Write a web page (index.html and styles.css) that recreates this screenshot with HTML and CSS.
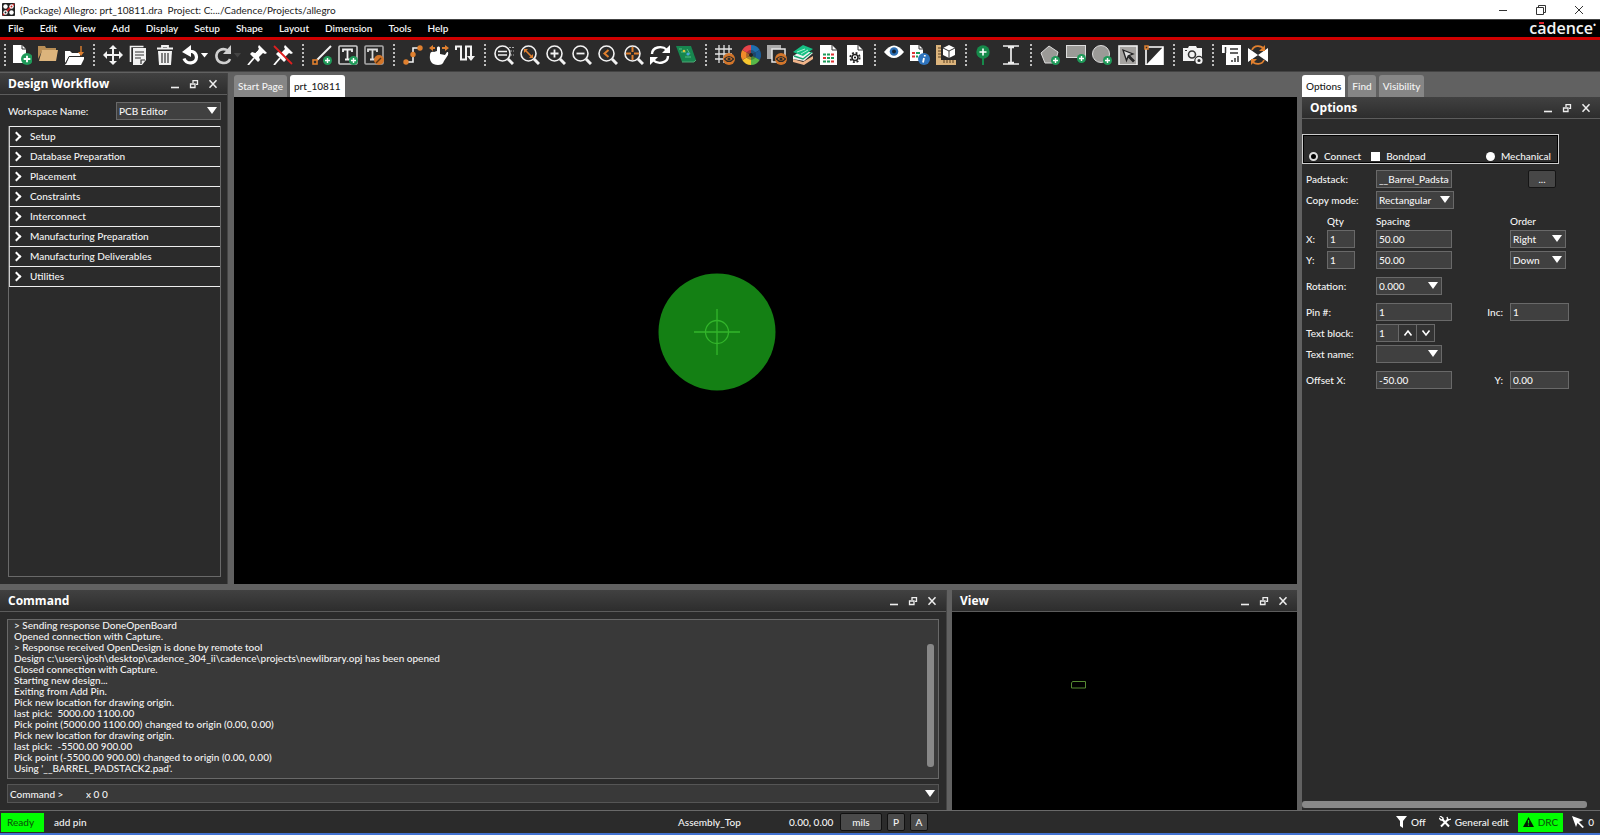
FILE: index.html
```html
<!DOCTYPE html>
<html lang="en">
<head>
  <meta charset="UTF-8">
  <meta name="viewport" content="width=device-width, initial-scale=1.0">
  <title>Allegro: prt_10811.dra</title>
  <link rel="stylesheet" href="styles.css">
</head>
<body>

  <!-- shared shapes -->
  <svg class="defs" width="0" height="0" aria-hidden="true">
    <symbol id="plus" viewBox="0 0 9 9"><circle cx="4.500" cy="4.500" r="4.500" fill="#1f9a59"/><path d="M4.500 2v5M2 4.500h5" stroke="#fff" stroke-width="1.400"/></symbol>
    <symbol id="eye-badge" viewBox="0 0 12 12"><circle cx="6" cy="6" r="6" fill="#d2752a"/><path d="M1.500 6Q6 1 10.500 6Q6 11 1.500 6z" fill="none" stroke="#2b2b2b" stroke-width="1.200"/><circle cx="6" cy="6" r="1.600" fill="#2b2b2b"/></symbol>
    <symbol id="lens" viewBox="0 0 20 20"><circle cx="8.500" cy="8.500" r="7.500" fill="none" stroke="#f2f2f2" stroke-width="1.600"/><path d="M14 14l5 5" stroke="#f2f2f2" stroke-width="3"/></symbol>
    <symbol id="min" viewBox="0 0 10 10"><path d="M1 8.500h8" stroke="#eee" stroke-width="1.600"/></symbol>
    <symbol id="restore" viewBox="0 0 10 10"><path d="M4 4V1.700h4.500v3.600H7M1.500 5h4.500v3.500H1.500z" fill="none" stroke="#eee" stroke-width="1.300"/></symbol>
    <symbol id="close" viewBox="0 0 10 10"><path d="M1.500 1.200l7 7.600M8.500 1.200l-7 7.600" stroke="#eee" stroke-width="1.500"/></symbol>
  </svg>

  <header class="titlebar">
    <svg width="13" height="13" viewBox="0 0 13 13"><rect width="13" height="13" rx="1" fill="#222"/><path d="M1 12L12 1" stroke="#c22" stroke-width="2"/><g fill="#fff"><circle cx="3.500" cy="3.500" r="2.200"/><circle cx="9.500" cy="3.500" r="2.200"/><circle cx="3.500" cy="9.500" r="2.200"/><circle cx="9.500" cy="9.500" r="2.200"/></g><circle cx="9.500" cy="3.500" r="1" fill="#c22"/><circle cx="3.500" cy="9.500" r="1" fill="#222"/></svg>
    <span class="titlebar-text">(Package) Allegro: prt_10811.dra&nbsp; Project: C:.../Cadence/Projects/allegro</span>
    <div class="window-buttons">
      <button aria-label="Minimize"><svg width="10" height="10"><path d="M1 5.500h8" stroke="#333"/></svg></button>
      <button aria-label="Restore"><svg width="10" height="10"><path d="M2.500 2.500V.5h7v7h-2M.5 2.500h7v7h-7z" fill="none" stroke="#333"/></svg></button>
      <button aria-label="Close"><svg width="10" height="10"><path d="M1 1l8 8M9 1l-8 8" stroke="#333"/></svg></button>
    </div>
  </header>

  <nav class="menubar">
    <button>File</button>
    <button>Edit</button>
    <button>View</button>
    <button>Add</button>
    <button>Display</button>
    <button>Setup</button>
    <button>Shape</button>
    <button>Layout</button>
    <button>Dimension</button>
    <button>Tools</button>
    <button>Help</button>
    <span class="logo">c<span class="logo-a">a</span>dence<sup>&bull;</sup></span>
  </nav>

  <div class="toolbar">
    <!-- file -->
    <div class="tools">
      <button aria-label="New"><svg viewBox="0 0 20 20"><path d="M1 0h9l4 4v14H1z" fill="#fff"/><path d="M10 0v4h4" fill="none" stroke="#2b2b2b"/><use href="#plus" x="9" y="8" width="12" height="12"/></svg></button>
      <button aria-label="Open"><svg viewBox="0 0 20 20"><path d="M0 1h7l1 2h10v3H4L0 14z" fill="#b88d55"/><path d="M4 5h16l-2 11H1z" fill="#dcb47c"/></svg></button>
      <button aria-label="Save"><svg viewBox="0 0 20 20"><path d="M1 6h5l2 2h8v4H5l-4 6z" fill="#fff"/><path d="M5 12h16l-4 8H1z" fill="#fff"/><path d="M16 11.500H5L1.500 19" fill="none" stroke="#2b2b2b"/><path d="M17 1v8" stroke="#e0802f" stroke-width="1.400"/><path d="M14 7h6l-3 4z" fill="#e0802f"/></svg></button>
    </div>
    <!-- edit -->
    <div class="tools">
      <button aria-label="Move"><svg viewBox="0 0 20 20"><path d="M10 3v14M3 10h14" stroke="#f2f2f2" stroke-width="2"/><path d="M10 0l4 4H6zM10 20l4-4H6zM0 10l4-4v8zM20 10l-4-4v8z" fill="#f2f2f2"/></svg></button>
      <button aria-label="Copy"><svg viewBox="0 0 20 20"><path d="M1.500 17V1.500h13" fill="none" stroke="#f2f2f2" stroke-width="1.600"/><path d="M4 3h13v12l-4 5H4z" fill="#f2f2f2"/><path d="M6 7h9M6 10h9M6 13h6M12 19v-4h4" stroke="#333" stroke-width="1.200" fill="none"/></svg></button>
      <button aria-label="Delete"><svg viewBox="0 0 20 20"><path d="M2 3.500h16M7 3V1h6v2" fill="none" stroke="#f2f2f2" stroke-width="1.800"/><path d="M3 6h14l-1 14H4z" fill="#f2f2f2"/><path d="M7 8v10M10 8v10M13 8v10" stroke="#333" stroke-width="1.200"/></svg></button>
      <button class="split" aria-label="Undo"><svg viewBox="0 0 20 20"><path d="M5 7c5-1.500 10-1 10.500 5 0 7-10 8-12.500 1.500" fill="none" stroke="#fff" stroke-width="3.200"/><path d="M1 7l9-7v12z" fill="#fff"/></svg><i class="caret"></i></button>
      <button class="split off" aria-label="Redo"><svg viewBox="0 0 20 20"><path d="M14 5.500C8 2 2 6 2.500 12c1 7 11 8 13.500 2" fill="none" stroke="#d0d0d0" stroke-width="2.600"/><path d="M17 0v9h-8z" fill="#d0d0d0"/></svg><i class="caret"></i></button>
      <button aria-label="Fix"><svg viewBox="0 0 20 20"><path d="M12 0l8 8-2 1-2-1-4 4 1 3-2 2-8-8 2-2 3 1 4-4-1-2z" fill="#fff"/><path d="M11 5l-3 3" stroke="#444"/><path d="M7 13l-6 7" stroke="#fff" stroke-width="1.800"/></svg></button>
      <button aria-label="Unfix"><svg viewBox="0 0 20 20"><path d="M12 0l8 8-2 1-2-1-4 4 1 3-2 2-8-8 2-2 3 1 4-4-1-2z" fill="#fff"/><path d="M7 13l-6 7" stroke="#fff" stroke-width="1.800"/><path d="M1 1l18 18" stroke="#e02020" stroke-width="1.800"/></svg></button>
    </div>
    <!-- text -->
    <div class="tools">
      <button aria-label="Add line"><svg viewBox="0 0 20 20"><path d="M5 15L19 1" stroke="#f2f2f2" stroke-width="2"/><rect x="1" y="15" width="4" height="4" fill="none" stroke="#e0802f" stroke-width="1.600"/><use href="#plus" x="11" y="11" width="9" height="9"/></svg></button>
      <button aria-label="Add text"><svg viewBox="0 0 20 20"><rect x="1" y="1" width="18" height="18" rx="1" fill="#2b2b2b" stroke="#ccc" stroke-width="1.600"/><path d="M5 7V4.500h9V7M9.500 4.500v10M7 14.500h5" fill="none" stroke="#f2f2f2" stroke-width="1.800"/><use href="#plus" x="11" y="11" width="9" height="9"/></svg></button>
      <button aria-label="Edit text"><svg viewBox="0 0 20 20"><rect x="1" y="1" width="18" height="18" rx="1" fill="#2b2b2b" stroke="#aaa" stroke-width="1.600"/><path d="M4 7V4.500h9V7M8.500 4.500v10M6 14.500h5" fill="none" stroke="#ddd" stroke-width="1.800"/><circle cx="15" cy="15" r="5" fill="#d2752a"/><path d="M12 18l5-5" stroke="#5a3410" stroke-width="1.500"/></svg></button>
    </div>
    <!-- route -->
    <div class="tools">
      <button aria-label="Add connect"><svg viewBox="0 0 20 20"><path d="M3 17h7V9M10 9V3h7" fill="none" stroke="#f2f2f2" stroke-width="1.600"/><g fill="#e0802f"><circle cx="3" cy="17" r="2.700"/><circle cx="10" cy="9.500" r="2.700"/><circle cx="17" cy="3" r="2.700"/></g></svg></button>
      <button aria-label="Slide"><svg viewBox="0 0 20 20"><path d="M8 3c0-2 3-2 3 0v6l5 1 2-3c2 0 1 2 1 3l-4 6c-1 3-3 4-6 4-6 0-9-4-8-10 0-3 2-4 4-3l3-1z" fill="#fff"/><path d="M0 3l4-3v2h2v2H4v2zM20 3l-4-3v2h-3v2h3v2z" fill="#e0802f"/></svg></button>
      <button aria-label="Delay tune"><svg viewBox="0 0 20 20"><path d="M1 5V1.500h5v13h5v-13h5v11" fill="none" stroke="#f2f2f2" stroke-width="2"/><path d="M12 11h8l-4 5z" fill="#f2f2f2"/></svg></button>
    </div>
    <!-- zoom -->
    <div class="tools">
      <button aria-label="Zoom points"><svg viewBox="0 0 20 20"><path d="M15 2.500h5M16 6h4M16 10h4" stroke="#aaa" stroke-dasharray="2 1"/><use href="#lens"/><path d="M4 6.500h9M4 10h9" stroke="#f2f2f2" stroke-width="1.500"/></svg></button>
      <button aria-label="Zoom fit"><svg viewBox="0 0 20 20"><use href="#lens"/><path d="M5 5l7 7" stroke="#e0802f" stroke-width="1.600"/><path d="M4 4h4L4 8zM13 13H9l4-4z" fill="#e0802f"/></svg></button>
      <button aria-label="Zoom in"><svg viewBox="0 0 20 20"><use href="#lens"/><path d="M8.500 4.500v8M4.500 8.500h8" stroke="#f2f2f2" stroke-width="1.800"/></svg></button>
      <button aria-label="Zoom out"><svg viewBox="0 0 20 20"><use href="#lens"/><path d="M4.500 8.500h8" stroke="#f2f2f2" stroke-width="1.800"/></svg></button>
      <button aria-label="Zoom previous"><svg viewBox="0 0 20 20"><use href="#lens"/><path d="M10.500 5L6.500 8.500l4 3.500" fill="none" stroke="#e0802f" stroke-width="2"/></svg></button>
      <button aria-label="Zoom center"><svg viewBox="0 0 20 20"><use href="#lens"/><path d="M8.500 2v5M8.500 10v5M2 8.500h5M10 8.500h5" stroke="#e0802f" stroke-width="2"/></svg></button>
      <button aria-label="Redraw"><svg viewBox="0 0 20 20"><path d="M2 9C2 2 12 0 17 5M18 11c0 7-10 9-15 4" fill="none" stroke="#fff" stroke-width="2.400"/><path d="M20 0v8h-8zM0 20v-8h8z" fill="#fff"/></svg></button>
      <button aria-label="3D canvas"><svg viewBox="0 0 20 20"><path d="M0 1h15l5 14-2 2H6z" fill="#17864f"/><path d="M3 4h3M5 7h5M11 4l3 5M9 12h6" stroke="#55c080"/><circle cx="8" cy="6" r="1.300" fill="#dfc63c"/><circle cx="12" cy="9" r="1.600" fill="#4aa6d8"/><path d="M6 17h12l2-2" fill="none" stroke="#4fa575"/></svg></button>
    </div>
    <!-- display -->
    <div class="tools">
      <button aria-label="Grid"><svg viewBox="0 0 20 20"><path d="M4 0v18M9 0v18M14 0v9M0 4h17M0 9h17M0 14h9" stroke="#e2e2e2" stroke-width="1.300"/><use href="#eye-badge" x="8" y="8" width="12" height="12"/></svg></button>
      <button aria-label="Color"><svg viewBox="0 0 20 20"><path d="M10 10V0a10 10 0 0 1 8.700 5z" fill="#1f6fae"/><path d="M10 10l8.700-5a10 10 0 0 1 0 10z" fill="#1a5a94"/><path d="M10 10l8.700 5A10 10 0 0 1 10 20z" fill="#58b848"/><path d="M10 10v10a10 10 0 0 1-8.700-5z" fill="#f7c62f"/><path d="M10 10l-8.700 5a10 10 0 0 1 0-10z" fill="#f08a2a"/><path d="M10 10L1.300 5A10 10 0 0 1 10 0z" fill="#e8434a"/><circle cx="10" cy="10" r="5" fill="#222" opacity=".35"/><circle cx="10" cy="10" r="2" fill="#222"/></svg></button>
      <button aria-label="Shadow"><svg viewBox="0 0 20 20"><rect width="14" height="14" fill="#aaa"/><rect x="5" y="4" width="13" height="13" fill="#2b2b2b" stroke="#e8e8e8" stroke-width="1.500"/><use href="#eye-badge" x="8" y="8" width="12" height="12"/></svg></button>
      <button aria-label="Layers"><svg viewBox="0 0 20 20"><path d="M0 14l10 3 10-6v3l-9 6-11-3z" fill="#f0b48a"/><path d="M0 11l10-6 10 3-9 8-11-2z" fill="#f2f2f2"/><path d="M0 7l10-7 10 4-10 7z" fill="#16c184"/><path d="M1 11l9 3 9-7" fill="none" stroke="#16a56f" stroke-width="1.400"/><path d="M4 7l8-3M8 9l7-4" stroke="#aef0d4"/></svg></button>
      <button aria-label="Report"><svg viewBox="0 0 20 20"><path d="M1 0h12l5 5v15H1z" fill="#fff"/><path d="M13 0v5h5" fill="none" stroke="#333"/><path d="M4 9.500h3m4 0h-3" stroke="#1f9a59" stroke-width="2"/><path d="M12 9.500h3M4 13h3M12 16.500h3" stroke="#d33" stroke-width="2"/><path d="M8 13h7M4 16.500h7" stroke="#1f9a59" stroke-width="2" stroke-dasharray="3 1"/></svg></button>
      <button aria-label="Settings"><svg viewBox="0 0 20 20"><path d="M2 0h11l5 5v15H2z" fill="#fff"/><path d="M13 0v5h5" fill="none" stroke="#333"/><circle cx="10" cy="12.500" r="3" fill="none" stroke="#222" stroke-width="1.600"/><circle cx="10" cy="12.500" r="4.700" fill="none" stroke="#222" stroke-width="1.800" stroke-dasharray="1.900 1.800"/><circle cx="10" cy="12.500" r="1"/></svg></button>
    </div>
    <div class="tools">
      <button aria-label="Show"><svg viewBox="0 0 20 20"><path d="M0 7Q10-6 20 7Q10 19 0 7z" fill="#fff"/><circle cx="10" cy="6.500" r="4.300" fill="#2c6fb5"/><circle cx="10" cy="6.500" r="2" fill="#123"/></svg></button>
      <button aria-label="Element info"><svg viewBox="0 0 20 20"><path d="M0 0h9l4 4v12H0z" fill="#fff"/><path d="M9 0v4h4" fill="none" stroke="#333"/><path d="M2 8h3M2 11.500h3" stroke="#d33" stroke-width="2"/><path d="M6 8h4M6 11.500h2" stroke="#1f9a59" stroke-width="2"/><circle cx="14" cy="14" r="6" fill="#2f74bd"/><path d="M14.800 10v1.500M14 13l-1 4.500" stroke="#fff" stroke-width="1.800"/></svg></button>
      <button aria-label="Measure"><svg viewBox="0 0 20 20"><path d="M0 0h5v15h15v5H0z" fill="#dcb47c"/><path d="M2 3h3M2 6h3M2 9h3M2 12h3M8 15v3M11 15v3M14 15v3M17 15v3" stroke="#5a4020"/><path d="M13 0l6 3v7l-6 3-6-3V3z" fill="#fff"/><path d="M7 3l6 3 6-3M13 6v7" fill="none" stroke="#333"/></svg></button>
    </div>
    <div class="tools">
      <button aria-label="Add pin"><svg viewBox="0 0 20 20"><path d="M8 10v10" stroke="#168a4a" stroke-width="2"/><circle cx="8" cy="7" r="6.700" fill="#168a4a"/><path d="M8 3.500v7M4.500 7h7" stroke="#fff" stroke-width="1.600"/></svg></button>
      <button aria-label="Pitch"><svg viewBox="0 0 20 20"><path d="M2 1h16M2 19h16M10 1v18M7 2.500h6M7 17.500h6" stroke="#eee" stroke-width="1.700"/></svg></button>
    </div>
    <!-- shapes -->
    <div class="tools">
      <button aria-label="Polygon"><svg viewBox="0 0 20 20"><path d="M9 1l9 6-3 11H5L1 8z" fill="#9b9a97" stroke="#ddd"/><use href="#plus" x="11" y="11" width="9" height="9"/></svg></button>
      <button aria-label="Rectangle"><svg viewBox="0 0 20 20"><rect x=".5" y=".5" width="19" height="12" fill="#9b9a97" stroke="#ddd"/><use href="#plus" x="11" y="9" width="9" height="9"/></svg></button>
      <button aria-label="Circle"><svg viewBox="0 0 20 20"><circle cx="9" cy="9" r="8.500" fill="#9b9a97" stroke="#ddd"/><use href="#plus" x="11" y="11" width="9" height="9"/></svg></button>
      <button aria-label="Select shape"><svg viewBox="0 0 20 20"><rect x="1" y="1" width="18" height="19" fill="#a5a3a0" stroke="#eee" stroke-width="1.600"/><path d="M5 5l10 4-4 1.500 5 5-1 1-5-5-1.500 4z" fill="#ddd" stroke="#222" stroke-width="1.300"/></svg></button>
      <button aria-label="Void"><svg viewBox="0 0 20 20"><path d="M2 2h17v18H2z" fill="#2b2b2b" stroke="#fff" stroke-width="1.600"/><path d="M19 2v18H2z" fill="#fff"/><rect x="1" y="1" width="3" height="3" fill="#2b2b2b" stroke="#e0802f" stroke-width="1.500"/></svg></button>
    </div>
    <div class="tools">
      <button aria-label="Snapshot"><svg viewBox="0 0 20 20"><path d="M0 3h5l1-2h7l1 2h5v13H0z" fill="#f2f2f2"/><circle cx="9" cy="9.500" r="3.500" fill="none" stroke="#333" stroke-width="1.600"/><path d="M2 5.500h2" stroke="#333"/><circle cx="16" cy="15.500" r="4.700" fill="#2b2b2b"/><circle cx="16" cy="15.500" r="2.600" fill="none" stroke="#f2f2f2" stroke-width="2"/></svg></button>
    </div>
    <div class="tools">
      <button aria-label="Artwork"><svg viewBox="0 0 20 20"><path d="M0 0h19v20H4V8H0z" fill="#fff"/><path d="M3.500 2v6M8 4h8M8 8h8M10 17v-2M13 17v-4M16 17v-6" stroke="#333" stroke-width="1.500"/></svg></button>
      <button aria-label="Mirror"><svg viewBox="0 0 20 20"><path d="M0 3l10 7-10 7zM20 3l-10 7 10 7z" fill="#fff"/><path d="M4 5c2-5 9-5 12-1M16 15c-2 5-9 5-12 1" fill="none" stroke="#e0802f" stroke-width="1.800"/><path d="M17 0v6h-6zM3 20v-6h6z" fill="#e0802f"/></svg></button>
    </div>
  </div>

  <main class="workspace">
    <div class="left">
      <div class="upper">
        <section class="panel workflow">
          <div class="panel-head">
            <h2>Design Workflow</h2>
            <div class="panel-buttons">
              <button aria-label="Minimize"><svg><use href="#min"/></svg></button>
              <button aria-label="Float"><svg><use href="#restore"/></svg></button>
              <button aria-label="Close"><svg><use href="#close"/></svg></button>
            </div>
          </div>
          <div class="workspace-name">
            <label for="workspace">Workspace Name:</label>
            <span class="select"><select id="workspace"><option>PCB Editor</option></select></span>
          </div>
          <div class="flow-list">
            <button>Setup</button>
            <button>Database Preparation</button>
            <button>Placement</button>
            <button>Constraints</button>
            <button>Interconnect</button>
            <button>Manufacturing Preparation</button>
            <button>Manufacturing Deliverables</button>
            <button>Utilities</button>
          </div>
        </section>

        <section class="editor">
          <div class="tabs">
            <button>Start Page</button>
            <button class="active">prt_10811</button>
          </div>
          <div class="canvas">
            <svg class="pad" width="118" height="118" viewBox="0 0 118 118">
              <circle cx="59" cy="59" r="58.500" fill="#148014"/>
              <path d="M59 36v46M36 59h46" stroke="#33b52b" stroke-width="1.300"/>
              <circle cx="59" cy="59" r="11.500" fill="none" stroke="#33b52b" stroke-width="1.300"/>
            </svg>
          </div>
        </section>
      </div>

      <div class="lower">
        <section class="panel command">
          <div class="panel-head">
            <h2>Command</h2>
            <div class="panel-buttons">
              <button aria-label="Minimize"><svg><use href="#min"/></svg></button>
              <button aria-label="Float"><svg><use href="#restore"/></svg></button>
              <button aria-label="Close"><svg><use href="#close"/></svg></button>
            </div>
          </div>
          <div class="log">
            <div class="log-text">
              <p>&gt; Sending response DoneOpenBoard</p>
              <p>Opened connection with Capture.</p>
              <p>&gt; Response received OpenDesign is done by remote tool</p>
              <p>Design c:\users\josh\desktop\cadence_304_ii\cadence\projects\newlibrary.opj has been opened</p>
              <p>Closed connection with Capture.</p>
              <p>Starting new design...</p>
              <p>Exiting from Add Pin.</p>
              <p>Pick new location for drawing origin.</p>
              <p>last pick:&nbsp; 5000.00 1100.00</p>
              <p>Pick point (5000.00 1100.00) changed to origin (0.00, 0.00)</p>
              <p>Pick new location for drawing origin.</p>
              <p>last pick:&nbsp; -5500.00 900.00</p>
              <p>Pick point (-5500.00 900.00) changed to origin (0.00, 0.00)</p>
              <p>Using '__BARREL_PADSTACK2.pad'.</p>
            </div>
            <div class="scroll-v"></div>
          </div>
          <div class="prompt">
            <label for="cmd">Command &gt;</label>
            <input id="cmd" type="text" value="x 0 0">
            <button aria-label="History"><i class="caret big"></i></button>
          </div>
        </section>

        <section class="panel view">
          <div class="panel-head">
            <h2>View</h2>
            <div class="panel-buttons">
              <button aria-label="Minimize"><svg><use href="#min"/></svg></button>
              <button aria-label="Float"><svg><use href="#restore"/></svg></button>
              <button aria-label="Close"><svg><use href="#close"/></svg></button>
            </div>
          </div>
          <div class="world">
            <svg class="world-box" width="15" height="8"><path d="M1.500.5h13v6.500H.5v-5z" fill="none" stroke="#568a32"/></svg>
          </div>
        </section>
      </div>
    </div>

    <aside class="right">
      <div class="tabs">
        <button class="active">Options</button>
        <button>Find</button>
        <button>Visibility</button>
      </div>
      <section class="panel options">
        <div class="panel-head">
          <h2>Options</h2>
          <div class="panel-buttons">
            <button aria-label="Minimize"><svg><use href="#min"/></svg></button>
            <button aria-label="Float"><svg><use href="#restore"/></svg></button>
            <button aria-label="Close"><svg><use href="#close"/></svg></button>
          </div>
        </div>

        <div class="pin-type">
          <label><input type="radio" name="type" checked>Connect</label>
          <label><input type="checkbox">Bondpad</label>
          <label class="mechanical"><input type="radio" name="type">Mechanical</label>
        </div>

        <form class="pin-form">
          <div class="row">
            <label class="wide" for="padstack">Padstack:</label>
            <div class="cell"><input id="padstack" class="text" type="text" value="__Barrel_Padstack"></div>
            <div class="cell"><button type="button" class="browse">...</button></div>
          </div>
          <div class="row">
            <label class="wide" for="copy">Copy mode:</label>
            <span class="select copy"><select id="copy"><option>Rectangular</option></select></span>
          </div>
          <div class="row heads">
            <span></span><span>Qty</span><span>Spacing</span><span>Order</span>
          </div>
          <div class="row">
            <label for="qx">X:</label>
            <input id="qx" class="qty" type="text" value="1">
            <div class="cell"><input class="text" type="text" value="50.00" aria-label="X spacing"></div>
            <span class="select order"><select aria-label="X order"><option>Right</option></select></span>
          </div>
          <div class="row">
            <label for="qy">Y:</label>
            <input id="qy" class="qty" type="text" value="1">
            <div class="cell"><input class="text" type="text" value="50.00" aria-label="Y spacing"></div>
            <span class="select order"><select aria-label="Y order"><option>Down</option></select></span>
          </div>
          <div class="row apart">
            <label class="wide" for="rot">Rotation:</label>
            <span class="select mid"><select id="rot"><option>0.000</option></select></span>
          </div>
          <div class="row apart">
            <label class="wide" for="pin">Pin #:</label>
            <div class="cell"><input id="pin" class="text" type="text" value="1"><label for="inc">Inc:</label></div>
            <input id="inc" class="short" type="text" value="1">
          </div>
          <div class="row">
            <label class="wide" for="block">Text block:</label>
            <div class="spin">
              <input id="block" type="text" value="1">
              <button type="button" aria-label="Up"><svg width="10" height="10"><path d="M1.500 7.500L5 3l3.500 4.500" fill="none" stroke="#fff" stroke-width="1.600"/></svg></button>
              <button type="button" aria-label="Down"><svg width="10" height="10"><path d="M1.500 2.500L5 7l3.500-4.500" fill="none" stroke="#fff" stroke-width="1.600"/></svg></button>
            </div>
          </div>
          <div class="row">
            <label class="wide" for="tname">Text name:</label>
            <span class="select mid"><select id="tname"><option></option></select></span>
          </div>
          <div class="row apart">
            <label class="wide" for="ox">Offset X:</label>
            <div class="cell"><input id="ox" class="text" type="text" value="-50.00"><label for="oy">Y:</label></div>
            <input id="oy" class="short" type="text" value="0.00">
          </div>
        </form>
        <div class="scroll-h"></div>
      </section>
    </aside>
  </main>

  <footer class="status">
    <div class="status-left">
      <span class="ready">Ready</span>
      <span>add pin</span>
    </div>
    <div class="status-mid">
      <span class="layer">Assembly_Top</span>
      <span class="coords">0.00, 0.00</span>
      <button class="units">mils</button>
      <button>P</button>
      <button>A</button>
    </div>
    <div class="status-right">
      <span class="item"><svg width="11" height="12"><path d="M0 0h11L7 5v7L4 10V5z" fill="#fff"/></svg>Off</span>
      <span class="item tool"><svg width="12" height="12"><path d="M2 10.500L9.500 3M3 3l7 7.500" stroke="#fff" stroke-width="2"/><path d="M1 0l3 2v2L2 4 0 2M8 1l1 3 3-1" fill="none" stroke="#fff" stroke-width="1.300"/></svg>General edit</span>
      <span class="drc"><svg width="11" height="10"><path d="M5.500 0L11 10H0z" fill="#031c03"/><path d="M5.500 3v3.500M5.500 7.500v1.200" stroke="#00f000" stroke-width="1.200"/></svg>DRC</span>
      <span class="item"><svg width="12" height="12"><path d="M0 0l11 4-4 2 5 5-1.500 1L5.500 7 4 11z" fill="#fff"/></svg>0</span>
    </div>
  </footer>
  <div class="taskbar"></div>

</body>
</html>
```
FILE: styles.css
```css
* {
  box-sizing: border-box;
}

body {
  margin: 0;
  height: 100vh;
  display: flex;
  flex-direction: column;
  background: #2b2b2b;
  color: #f4f4f4;
  font-family: Lato, "Open Sans", sans-serif;
  font-size: 10px;
  font-weight: 500;
  line-height: 14px;
  overflow: hidden;
}

button,
input,
select {
  font: inherit;
  color: inherit;
  margin: 0;
}

button {
  background: none;
  border: none;
  padding: 0;
}

h2,
p {
  margin: 0;
}

.defs {
  position: absolute;
}

/* title bar */
.titlebar {
  height: 19px;
  display: flex;
  align-items: center;
  gap: 5px;
  padding: 0 16px 0 2px;
  background: #fff;
  color: #222;
  font-weight: 400;
}

.window-buttons {
  margin-left: auto;
  display: flex;
  gap: 28px;
}

.window-buttons button {
  display: flex;
}

/* menu */
.menubar {
  height: 21px;
  display: flex;
  align-items: center;
  gap: 16px;
  padding: 0 4px 2px 8px;
  background: #000;
  border-top: 1px solid #444;
  border-bottom: 3px solid #d00000;
  font-weight: 600;
}

.logo {
  margin-left: auto;
  font-family: "Open Sans", sans-serif;
  font-size: 16px;
  line-height: 16px;
}

.logo sup {
  font-size: 8px;
  line-height: 0;
}

.logo-a {
  position: relative;
}

.logo-a::before {
  content: "";
  position: absolute;
  top: 5px;
  left: 2px;
  width: 5px;
  height: 2px;
  background: #e0202a;
}

/* toolbar */
.toolbar {
  height: 32px;
  flex: none;
  display: flex;
  align-items: center;
  background: #2b2b2b;
  border-bottom: 1px solid #444;
  padding-bottom: 1px;
}

.tools {
  display: flex;
}

.tools::before {
  content: "";
  width: 2px;
  height: 22px;
  margin: 0 5px 0 6px;
  background: repeating-linear-gradient(#bbb 0 2px, transparent 2px 4px);
}

.tools:first-child::before {
  margin: 0 3px 0 4px;
}

.tools button {
  width: 26px;
  height: 22px;
  display: flex;
  align-items: center;
  justify-content: center;
}

.tools button svg {
  width: 20px;
  height: 20px;
  flex: none;
}

.tools .split {
  width: 33px;
}

.caret {
  width: 8px;
  height: 5px;
  flex: none;
  background: #fff;
  clip-path: polygon(0 0, 100% 0, 50% 100%);
}

.caret.big {
  width: 10px;
  height: 7px;
}

.off .caret {
  background: #444;
}

/* docks */
.workspace {
  flex: 1;
  min-height: 0;
  display: flex;
  gap: 5px;
  background: #616161;
  padding-top: 1px;
}

.left {
  flex: 1;
  min-width: 0;
  display: flex;
  flex-direction: column;
  gap: 6px;
}

.upper {
  flex: 1;
  min-height: 0;
  display: flex;
  gap: 6px;
}

.lower {
  height: 220px;
  display: flex;
  gap: 5px;
}

.right {
  width: 298px;
  display: flex;
  flex-direction: column;
}

.panel {
  background: #2b2b2b;
  display: flex;
  flex-direction: column;
}

.panel-head {
  height: 22px;
  flex: none;
  display: flex;
  align-items: center;
  justify-content: space-between;
  padding: 0 9px 0 8px;
  background: linear-gradient(#414141, #2d2d2d);
  border-bottom: 1px solid #5c5c5c;
}

.panel-head h2 {
  font-family: "Open Sans", sans-serif;
  font-size: 12px;
  line-height: 16px;
  font-weight: 700;
  color: #fff;
}

.panel-buttons {
  display: flex;
  gap: 9px;
}

.panel-buttons button,
.panel-buttons svg {
  display: block;
  width: 10px;
  height: 10px;
}

/* fields */
.select {
  position: relative;
  display: block;
  height: 18px;
}

.select::after {
  content: "";
  position: absolute;
  top: 5px;
  right: 4px;
  width: 10px;
  height: 7px;
  background: #fff;
  clip-path: polygon(0 0, 100% 0, 50% 100%);
  pointer-events: none;
}

select,
.pin-form input {
  display: block;
  width: 100%;
  height: 18px;
  padding: 0 2px;
  background: #404040;
  border: 1px solid #696969;
  border-radius: 0;
  appearance: none;
  outline: none;
}

/* workflow */
.workflow {
  width: 228px;
  border-right: 1px solid #444;
}

.workspace-name {
  display: flex;
  justify-content: space-between;
  align-items: center;
  padding: 7px 6px 6px 8px;
}

.workspace-name .select {
  width: 105px;
}

.flow-list {
  flex: 1;
  margin: 0 6px 7px 8px;
  border: 1px solid #696969;
  border-top: none;
}

.flow-list button {
  display: flex;
  align-items: center;
  width: 100%;
  height: 20px;
  padding: 0 0 1px 3px;
  border-top: 1px solid #eee;
  border-left: 1px solid #ccc;
  text-align: left;
}

.flow-list button::before {
  content: "";
  width: 5px;
  height: 5px;
  margin-right: 10px;
  border-top: 2px solid #fff;
  border-right: 2px solid #fff;
  transform: rotate(45deg);
}

.flow-list button:last-child {
  height: 21px;
  border-bottom: 1px solid #eee;
}

/* tabs */
.tabs {
  height: 24px;
  flex: none;
  display: flex;
  align-items: flex-end;
  gap: 3px;
}

.tabs button {
  height: 22px;
  padding: 0 4px;
  background: #868686;
  border-radius: 3px 3px 0 0;
}

.tabs .active {
  background: #fff;
  color: #222;
}

.editor {
  flex: 1;
  display: flex;
  flex-direction: column;
}

.canvas {
  flex: 1;
  position: relative;
  background: #000;
}

.pad {
  position: absolute;
  left: 424px;
  top: 176px;
}

/* command */
.command {
  flex: 1;
  min-width: 0;
  border-right: 1px solid #444;
}

.log {
  flex: 1;
  display: flex;
  justify-content: space-between;
  margin: 7px 7px 5px;
  padding-left: 6px;
  background: #393939;
  border: 1px solid #696969;
}

.log-text {
  line-height: 11px;
}

.scroll-v {
  width: 7px;
  margin: 24px 4px 11px;
  background: #888;
  border-radius: 3px;
}

.prompt {
  height: 19px;
  display: flex;
  align-items: center;
  margin: 0 7px 7px;
  padding: 0 3px 0 2px;
  background: #393939;
  border: 1px solid #555;
}

.prompt label {
  width: 76px;
}

.prompt input {
  flex: 1;
  padding: 0;
  background: none;
  border: none;
  outline: none;
}

.prompt button {
  display: flex;
}

/* view */
.view {
  width: 345px;
}

.world {
  flex: 1;
  position: relative;
  background: #000;
}

.world-box {
  position: absolute;
  left: 119px;
  top: 69px;
}

/* options */
.options {
  flex: 1;
}

.pin-type {
  width: 257px;
  height: 30px;
  margin-top: 15px;
  padding: 0 7px 0 6px;
  display: flex;
  align-items: flex-end;
  gap: 10px;
  border: 1px solid #ccc;
  box-shadow: inset 0 0 0 1px #000;
}

.pin-type label {
  display: flex;
  align-items: center;
  gap: 6px;
}

.pin-type .mechanical {
  margin-left: auto;
}

.pin-type input {
  appearance: none;
  width: 9px;
  height: 9px;
  background: #fff;
}

.pin-type input[type="radio"] {
  border-radius: 50%;
}

.pin-type input[type="radio"]:checked {
  background: #000;
  border: 2px solid #ddd;
}

.pin-form {
  flex: 1;
  display: flex;
  flex-direction: column;
  gap: 3px;
  padding: 6px 0 0 4px;
}

.row {
  display: grid;
  grid-template-columns: 21px 49px 134px 1fr;
  align-items: center;
  height: 18px;
}

.row.apart {
  margin-top: 5px;
}

.row.heads {
  height: 15px;
  align-items: end;
  line-height: 12px;
}

.wide {
  grid-column: span 2;
}

.cell {
  display: flex;
  align-items: center;
  justify-content: space-between;
  padding-right: 7px;
}

.pin-form .text {
  width: 76px;
}

.pin-form .qty {
  width: 28px;
}

.pin-form .short {
  width: 59px;
}

.copy {
  width: 78px;
}

.mid {
  width: 66px;
}

.order {
  width: 56px;
}

.browse {
  width: 28px;
  height: 18px;
  margin-left: 18px;
  background: #474747;
  border: 1px solid #151515;
  border-radius: 2px;
}

.spin {
  display: flex;
}

.pin-form .spin input {
  width: 23px;
}

.spin button {
  width: 18px;
  height: 18px;
  display: flex;
  align-items: center;
  justify-content: center;
  background: #333;
  border: 1px solid #696969;
  border-left: none;
}

.scroll-h {
  height: 7px;
  margin: 0 13px 2px 0;
  background: #888;
  border-radius: 3px;
}

/* status bar */
.status {
  height: 23px;
  flex: none;
  display: grid;
  grid-template-columns: 677px 1fr auto;
  align-items: center;
  padding: 0 6px 0 1px;
  border-top: 1px solid #696969;
}

.status-left,
.status-mid,
.status-right,
.item,
.drc {
  display: flex;
  align-items: center;
}

.status-left {
  gap: 10px;
}

.ready,
.drc {
  height: 19px;
  padding: 2px 10px 2px 6px;
  background: #00ff00;
  color: #0a5a0a;
}

.status-mid {
  gap: 5px;
}

.layer {
  width: 106px;
}

.coords {
  width: 46px;
}

.status-mid button {
  width: 18px;
  height: 18px;
  background: #4a4a4a;
  border: 1px solid #111;
  border-radius: 2px;
}

.status-mid .units {
  width: 42px;
}

.status-right {
  gap: 9px;
}

.item,
.drc {
  gap: 4px;
}

.tool {
  margin-left: 4px;
}

.drc {
  padding: 2px 5px;
}

.taskbar {
  height: 2px;
  flex: none;
  background: #4272d0;
}
```
